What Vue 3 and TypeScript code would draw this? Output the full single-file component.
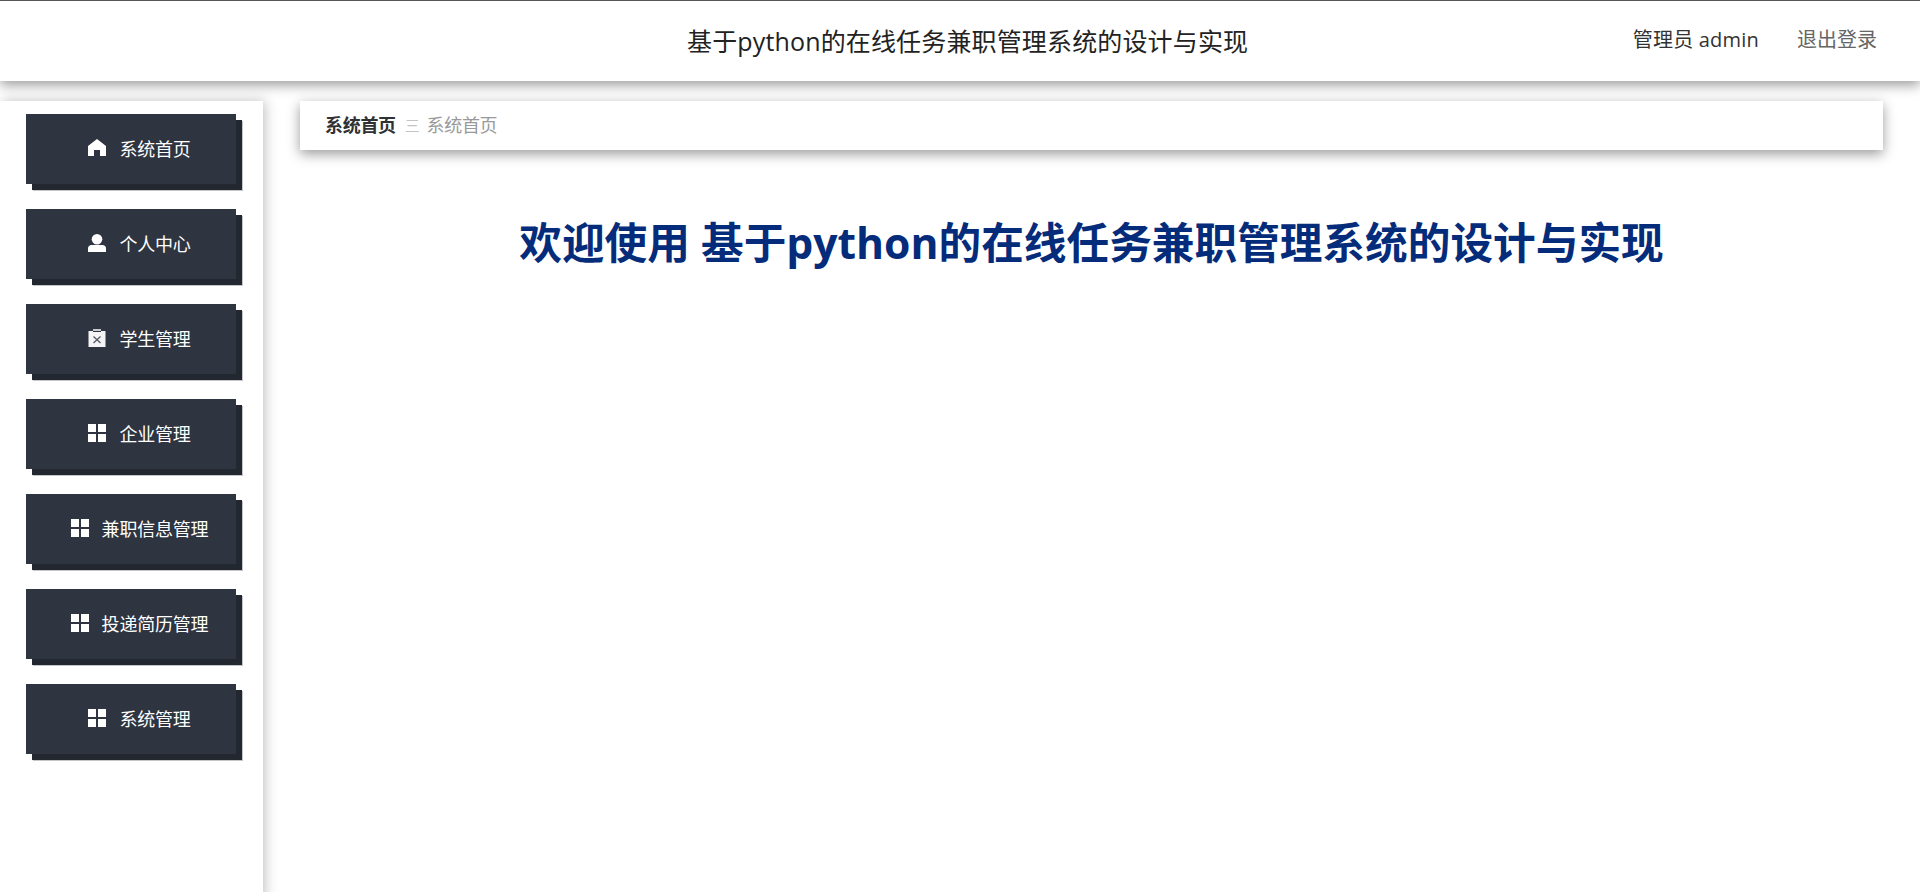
<script setup lang="ts">
interface MenuItem {
  label: string
  icon: 'home' | 'user' | 'clip' | 'grid'
}

const menus: MenuItem[] = [
  { label: '系统首页', icon: 'home' },
  { label: '个人中心', icon: 'user' },
  { label: '学生管理', icon: 'clip' },
  { label: '企业管理', icon: 'grid' },
  { label: '兼职信息管理', icon: 'grid' },
  { label: '投递简历管理', icon: 'grid' },
  { label: '系统管理', icon: 'grid' }
]

const systemName = '基于python的在线任务兼职管理系统的设计与实现'
</script>

<template>
  <div class="page">
    <header class="topbar">
      <div class="topbar-title">{{ systemName }}</div>
      <div class="topbar-user">
        <span class="user-name">管理员 admin</span>
        <span class="logout">退出登录</span>
      </div>
    </header>

    <div class="layout">
      <aside class="sidebar">
        <div v-for="item in menus" :key="item.label" class="menu-item">
          <svg class="menu-icon" viewBox="0 0 18 18" aria-hidden="true">
            <path v-if="item.icon === 'home'" fill="#fff" d="M9 0 L18 7 V17 H12 V11 H6 V17 H0 V7 Z" />
            <template v-else-if="item.icon === 'user'">
              <circle cx="9" cy="5.3" r="5.3" fill="#fff" />
              <path fill="#fff" d="M0 18 V14.5 C0 12.5 1.5 11 3.5 11 H14.5 C16.5 11 18 12.5 18 14.5 V18 Z" />
            </template>
            <template v-else-if="item.icon === 'clip'">
              <path fill="#c9cbce" d="M5 0 H13 V2 H5 Z" />
              <path fill="#f4f4f4" d="M0.5 2 H5 V3 H13 V2 H17.5 V18 H0.5 Z" />
              <path fill="none" stroke="#555a64" stroke-width="1.3" d="M5.5 7.5 L12.5 14 M12.5 7.5 L5.5 14" />
            </template>
            <path v-else fill="#fff" d="M0 0 H8 V8 H0 Z M10 0 H18 V8 H10 Z M0 10 H8 V18 H0 Z M10 10 H18 V18 H10 Z" />
          </svg>
          <span class="menu-label">{{ item.label }}</span>
        </div>
      </aside>

      <main class="content">
        <nav class="crumb">
          <span class="crumb-first">系统首页</span>
          <span class="crumb-sep">三</span>
          <span class="crumb-last">系统首页</span>
        </nav>
        <h1 class="welcome">欢迎使用 {{ systemName }}</h1>
      </main>
    </div>
  </div>
</template>

<style>
body {
  background: #fff;
}
</style>

<style scoped>
.page {
  height: 892px;
  overflow: hidden;
  font-family: "Open Sans", "Noto Sans CJK SC", sans-serif;
  background: #fff;
}

.topbar {
  position: relative;
  z-index: 2;
  height: 80px;
  display: flex;
  align-items: center;
  justify-content: space-between;
  background: #fff;
  border-top: 1px solid #555;
  box-shadow: 0 4px 12px rgba(0, 0, 0, 0.4);
  padding: 0 43px 0 687px;
}

.topbar-title {
  font-size: 25px;
  letter-spacing: 0.15px;
  color: #222;
  padding-bottom: 2px;
}

.topbar-user {
  display: flex;
  gap: 38px;
  font-size: 20px;
  padding-bottom: 6px;
}

.user-name {
  color: #333;
  letter-spacing: 0.2px;
}

.logout {
  color: #666;
}

.layout {
  display: flex;
  padding-top: 20px;
  align-items: flex-start;
  height: 792px;
  box-sizing: border-box;
}

.sidebar {
  width: 263px;
  height: 800px;
  flex: none;
  box-sizing: border-box;
  padding: 13px 0 0 26px;
  background: #fff;
  box-shadow: 2px 0 12px rgba(0, 0, 0, 0.25);
  display: flex;
  flex-direction: column;
  gap: 25px;
}

.menu-item {
  width: 210px;
  height: 70px;
  flex: none;
  box-sizing: border-box;
  padding-left: 17px;
  display: flex;
  align-items: center;
  justify-content: center;
  gap: 13px;
  background: #2e3440;
  box-shadow: 6px 6px 0 #23272f, 7px 7px 0 #c4c6ca;
}

.menu-icon {
  width: 18px;
  height: 18px;
  flex: none;
  margin-top: -3px;
}

.menu-label {
  font-size: 18px;
  letter-spacing: -0.2px;
  color: #fff;
  line-height: 24px;
}

.content {
  flex: 1;
  min-width: 0;
  padding: 0 37px;
}

.crumb {
  height: 49px;
  box-sizing: border-box;
  padding: 0 0 3px 25px;
  display: flex;
  align-items: center;
  background: #fff;
  box-shadow: 0 4px 12px rgba(0, 0, 0, 0.4);
  font-size: 18px;
  letter-spacing: -0.3px;
}

.crumb-first {
  font-weight: 700;
  color: #303133;
}

.crumb-sep {
  margin: 0 7px 0 9px;
  font-size: 15px;
  color: #c4c4c4;
}

.crumb-last {
  color: #999;
}

.welcome {
  margin: 60px 0 0;
  text-align: center;
  font-size: 42.66px;
  line-height: 64px;
  font-weight: 700;
  color: #052c7b;
}
</style>
